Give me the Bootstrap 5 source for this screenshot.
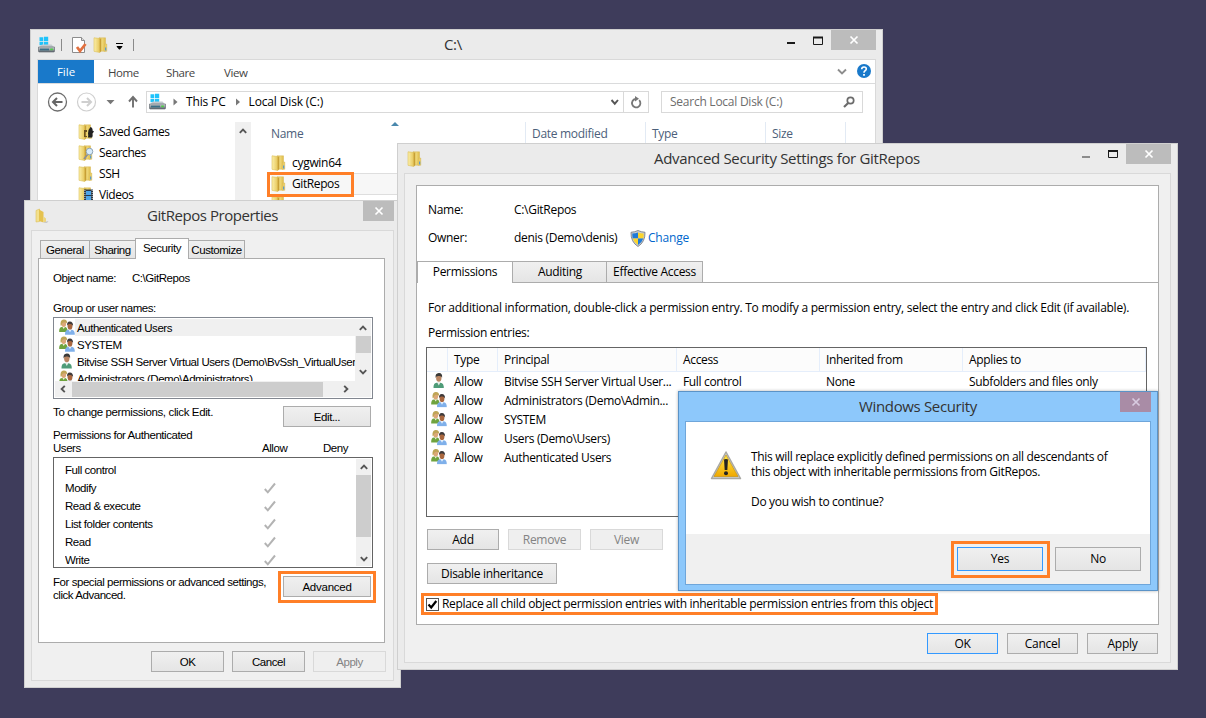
<!DOCTYPE html>
<html lang="en">
<head>
<meta charset="utf-8">
<meta name="viewport" content="width=device-width, initial-scale=1">
<title>GitRepos security settings</title>
<link rel="stylesheet" href="https://cdn.jsdelivr.net/npm/bootstrap@5.3.0/dist/css/bootstrap.min.css">
<style>
html,body{height:100%}
body{background:#3e3c5b;color:#000;font:12px/16px "Open Sans","Noto Sans",sans-serif;letter-spacing:-.3px;overflow:hidden;white-space:nowrap}
svg{display:block;flex:none}
/* windows */
.desk{width:1206px;height:718px}
.win{background:#ebebeb;border:1px solid #cfcfcf}
.win-title{font-size:15px;line-height:20px;letter-spacing:-.35px;color:#333;text-align:center;padding-bottom:2px}
.w-explorer{left:30px;top:29px;width:853px;height:260px}
.w-props{left:24px;top:200px;width:377px;height:488px}
.w-adv{left:397px;top:143px;width:781px;height:527px}
.w-dlg{left:678px;top:391px;width:480px;height:200px;background:#8dc8fb;border-color:#5b93c7;box-shadow:0 0 3px rgba(0,0,0,.3)}
.caps{top:0;right:6px}
.cap{height:20px;width:31px;background:#bcbcbc}
.cap.wide{width:45px}
.frame{background:#f0f0f0;border:1px solid #d9d9d9;margin:0 6px 6px}
/* buttons */
.wbtn{height:21px;padding:0;border:1px solid #acacac;border-radius:0;background:linear-gradient(#f0f0f0,#e5e5e5);color:#000;font:inherit;letter-spacing:inherit;line-height:19px}
.wbtn:disabled{border-color:#d9d9d9;background:#efefef;color:#838383;opacity:1}
.wbtn.def,.wbtn.def:hover{border-color:#3399ff;transition:none}
.w-dlg .wbtn{line-height:20px}
.w-adv .wbtn{line-height:19px}
.hl{border:3px solid #ff7f27}
/* explorer */
.body-x{background:#fff;border:1px solid #d9d9d9;border-bottom:0;margin:0 6px;height:230px}
.menu-x{height:24px;border-bottom:1px solid #dadbdc;color:#444;line-height:25px;font-size:11.5px;letter-spacing:-.4px}
.file-x{width:56px;height:23px;background:#1979ca;color:#fff;text-align:center;line-height:24px;letter-spacing:0}
.box-x{height:22px;border:1px solid #d9d9d9;background:#fff;line-height:20px}
.tree{width:197px;padding-left:40px;letter-spacing:-.45px}
.tree>div{height:21px}
.tree span{padding-bottom:2px}
.vbar{width:16px;background:#f0f0f0}
.hd{color:#4c607a;line-height:24px;height:21px;border-right:1px solid #e2eaf4;letter-spacing:-.3px}
/* properties dialog */
.ms{font:11.5px/13px "Liberation Sans",Arial,sans-serif;letter-spacing:-.45px}
.ms .wbtn{line-height:20px}
.page{background:#fff;border:1px solid #acacac}
.tabp{border:1px solid #acacac;border-bottom:0;background:linear-gradient(#f0f0f0,#e5e5e5);height:18px;line-height:19px;text-align:center;margin-right:-1px}
.tabp.on{height:21px;background:#fff;margin-bottom:-1px;line-height:19px;z-index:1}
.lst{border:1px solid #828790;background:#fff;width:320px}
.urow{height:17px;line-height:18px;padding-left:4px}
.urow span{padding-left:2px;flex:1;height:17px}
.prow{height:18px;line-height:18px}
/* advanced window */
.taba{border:1px solid #acacac;border-bottom:0;background:linear-gradient(#f0f0f0,#e5e5e5);height:21px;line-height:20px;text-align:center;width:96px;margin-right:-1px}
.taba.on{background:#fff;height:22px;margin-bottom:-1px}
.grid-a{display:grid;grid-template-columns:21px 50px 179px 143px 143px 1fr;letter-spacing:-.34px}
.grid-a>*{padding-left:6px;overflow:hidden}
.ghead>*{border-right:1px solid #e5eefb;border-bottom:1px solid #e5eefb;background:#fcfcfc;height:24px;line-height:24px}
.grow>*{height:19px;line-height:20px}
.grow>svg{height:17px;margin-left:4px;padding:0}
.chk{width:13px;height:13px;border:1px solid #555;background:#fff}
</style>
</head>
<body>
<svg width="0" height="0" class="position-absolute">
<defs>
<linearGradient id="gf" x1="0" x2="1"><stop offset="0" stop-color="#fbefa9"/><stop offset="1" stop-color="#e6c659"/></linearGradient>
<linearGradient id="gb" x1="0" x2="1"><stop offset="0" stop-color="#c39a2e"/><stop offset=".35" stop-color="#f3df85"/><stop offset="1" stop-color="#dfbc4a"/></linearGradient>
<linearGradient id="gw" x1="0" y1="0" x2="0" y2="1"><stop offset="0" stop-color="#ffe94a"/><stop offset="1" stop-color="#f0a800"/></linearGradient>
<linearGradient id="gd" x1="0" y1="0" x2="0" y2="1"><stop offset="0" stop-color="#cfd4d8"/><stop offset="1" stop-color="#5d666e"/></linearGradient>
<symbol id="folder" viewBox="0 0 16 16"><path d="M6 .8h6.500v13.400H6z" fill="url(#gb)" stroke="#d6b650" stroke-width=".5"/><path d="M11.500 7h2.300v7.300h-2.800z" fill="#e9cd66" stroke="#d6b650" stroke-width=".4"/><path d="M1 .8l5.800.7v14L1 14.300z" fill="url(#gf)" stroke="#dcbf58" stroke-width=".6"/><path d="M6.800 2.500L8.300 1v13l-1.500 1.600z" fill="#c79f35"/><path d="M12.200 10.500h1v3h-1z" fill="#3d8fe0"/></symbol>
<symbol id="drive" viewBox="0 0 17 17"><path d="M1.500 1.300h3.800v3.600H1.500zM6 .8h4.200v4.100H6zM1.500 5.700h3.800v3.600H1.500zM6 5.700h4.200v4.100H6z" fill="#1fc3fb"/><path d="M4 8.500h9.500l2.700 3H.8z" fill="#c3c9ce"/><path d="M.5 11h16v4.200q0 .8-.8.800H1.300q-.8 0-.8-.8z" fill="url(#gd)" stroke="#5a6268" stroke-width=".6"/><path d="M2 12.600h9v1.800H2z" fill="#3c6f86"/><path d="M12.300 12.500h2.500v1.700h-2.500z" fill="#49d43f"/></symbol>
<symbol id="one" viewBox="0 0 16 16"><path d="M2.500 15.500q-.3-4.800 3-5.300h4q3.500.6 3.300 5.300z" fill="#4f9c78"/><path d="M6 9.500l1.800 3.500 1.800-3.500z" fill="#e9efe9"/><ellipse cx="7.800" cy="5.600" rx="2.700" ry="3.700" fill="#b98562"/><path d="M4.600 5.500Q4 .8 7.800.6t3.300 4.600Q10.500 3.200 7.500 3.600 5 3.500 4.600 5.500z" fill="#3b3a38"/></symbol>
<symbol id="two" viewBox="0 0 16 16"><path d="M.2 12.900Q-.1 8.300 2.800 8h3.500q2.400.5 2.300 4.900z" fill="#6fa33e"/><path d="M3.500 8l1.200 2 1.200-2z" fill="#f3f3e4"/><ellipse cx="4.700" cy="4.800" rx="2.400" ry="3.200" fill="#dba878"/><path d="M1.600 6.800Q.8.600 4.600.4t3.500 4Q5.800 2.200 3.200 4.200 3 6.500 1.600 6.800z" fill="#bfa556"/><path d="M6 15.800q-.2-4.600 2.900-5h4q3 .6 2.900 5z" fill="#7fb0ea"/><path d="M9.400 10.600l1.600 2.600 1.600-2.600z" fill="#e8f1fb"/><ellipse cx="11" cy="7.200" rx="2.400" ry="3.400" fill="#a9673f"/><path d="M8.100 6.800Q7.500 2.500 10.800 2.400t3.300 4.500Q13 4.800 10.700 5.100 8.800 4.800 8.100 6.800z" fill="#3f3a3a"/></symbol>
<symbol id="x" viewBox="0 0 10 10"><path d="M1.500 1.500l7 7M8.500 1.500l-7 7" stroke="currentColor" stroke-width="1.700" fill="none"/></symbol>
<symbol id="up" viewBox="0 0 8 6"><path d="M.8 4.800L4 1.600l3.200 3.200" fill="none" stroke="#555" stroke-width="1.900"/></symbol>
<symbol id="tick" viewBox="0 0 12 12"><path d="M.8 7l3 3.300L11 1.500" fill="none" stroke="#b3b3b3" stroke-width="2"/></symbol>
</defs></svg>

<main class="desk position-relative overflow-hidden">

<!-- Explorer -->
<section class="win w-explorer position-absolute">
  <div class="caps position-absolute d-flex">
    <svg width="90" height="20" viewBox="0 0 90 20"><path d="M46 13h8" stroke="#1a1a1a" stroke-width="2"/><path d="M72.500 7.500h9v7h-9z" fill="none" stroke="#1a1a1a"/><path d="M72 7.500h10" stroke="#1a1a1a" stroke-width="2"/></svg>
    <div class="cap wide d-flex justify-content-center align-items-center text-white"><svg width="10" height="10"><use href="#x"/></svg></div>
  </div>
  <div class="d-flex align-items-center" style="height:29px">
    <svg width="17" height="17" style="margin-left:7px"><use href="#drive"/></svg>
    <svg width="76" height="20" viewBox="0 0 76 20"><path d="M6.500 4v12" stroke="#8a8a8a"/><path d="M17.500 2.500h9l3 3v12h-12z" fill="#fff" stroke="#8c8c8c"/><path d="M26.500 2.500v3h3" fill="#ddd" stroke="#8c8c8c"/><path d="M22 12l3 4 5.500-7" fill="none" stroke="#e2703f" stroke-width="2.800"/><use href="#folder" x="38" y="2" width="16" height="16"/><path d="M61 8.500h7M62 11.500h5l-2.500 2.800z" stroke="#000" fill="#000" stroke-width="1"/></svg>
    <svg width="4" height="20"><path d="M2.500 4v12" stroke="#8a8a8a"/></svg>
    <div class="win-title" style="margin-left:309px">C:\</div>
  </div>
  <div class="body-x">
    <div class="menu-x d-flex">
      <div class="file-x">File</div><div style="margin-left:14px;width:58px">Home</div><div style="width:58px">Share</div><div>View</div>
      <svg width="41" height="23" class="ms-auto" viewBox="0 0 41 23"><path d="M4 9.500l4 4 4-4" fill="none" stroke="#8d8d8d" stroke-width="1.900"/><circle cx="30" cy="11" r="7" fill="#1979ca"/><path d="M27.700 9.300q0-2.300 2.300-2.300t2.300 2q0 1-1.200 1.700T30 12.700" fill="none" stroke="#fff" stroke-width="1.600"/><path d="M29.100 14h1.800v1.700h-1.800z" fill="#fff"/></svg>
    </div>
    <div class="d-flex" style="padding:7px 12px 9px 8px">
      <svg width="100" height="22" viewBox="0 0 100 22"><g fill="none"><circle cx="11.500" cy="11" r="9" stroke="#6d6d6d" stroke-width="1.300"/><path d="M16.500 11h-9M11 7l-4 4 4 4" stroke="#666" stroke-width="2"/><circle cx="40.500" cy="11" r="9" stroke="#cfcfcf" stroke-width="1.200"/><path d="M35.500 11h9M41 7l4 4-4 4" stroke="#cfcfcf" stroke-width="2"/><path d="M87 16.500V7M83 10.500l4-4.500 4 4.500" stroke="#707070" stroke-width="1.900"/></g><path d="M60.500 9h8l-4 4.200z" fill="#777"/></svg>
      <div class="box-x d-flex align-items-center" style="width:503px;padding-left:2px;letter-spacing:-.15px">
        <svg width="17" height="17" style="margin-top:-2px"><use href="#drive"/></svg><svg width="20" height="20" viewBox="0 0 20 20"><path d="M7.500 6.500l4 3.500-4 3.500z" fill="#777"/></svg><span>This PC</span>
        <svg width="23" height="20" viewBox="0 0 23 20"><path d="M10 6.500l4 3.500-4 3.500z" fill="#777"/></svg><span>Local Disk (C:)</span>
        <svg width="44" height="20" class="ms-auto" viewBox="0 0 44 20"><path d="M7.500 8l3.300 3.700L14 8" fill="none" stroke="#555" stroke-width="1.900"/><path d="M19.500 0v20" stroke="#d9d9d9"/><path d="M35.200 8.200A4.200 4.200 0 1 1 31.500 7" fill="none" stroke="#777" stroke-width="1.800"/><path d="M31 4v5.500l4-2.800z" fill="#777"/></svg>
      </div>
      <div class="box-x d-flex align-items-center justify-content-between" style="width:202px;margin-left:12px;padding:0 6px 0 8px;color:#6d6d6d;letter-spacing:-.25px"><span>Search Local Disk (C:)</span><svg width="14" height="14" viewBox="0 0 14 14"><circle cx="8.500" cy="5.500" r="3.200" fill="none" stroke="#6b6b6b" stroke-width="1.700"/><path d="M6.200 8L2 12" stroke="#6b6b6b" stroke-width="2.200"/></svg></div>
    </div>
    <div class="d-flex">
      <div class="tree">
        <div class="d-flex align-items-center"><svg width="17" height="17" viewBox="0 0 17 17"><use href="#folder" width="16" height="16"/><path d="M12.500 3q2.500 1 2 3.500l1.500 1-1.500 2q.5 2-.5 4H10q.5-2.500 0-4 0-4 2.500-6.500z" fill="#222"/><path d="M6 6h3v2H7.500v4H9v1H6z" fill="#6b5120"/></svg><span class="ps-1">Saved Games</span></div>
        <div class="d-flex align-items-center"><svg width="17" height="17" viewBox="0 0 17 17"><use href="#folder" width="16" height="16"/><path d="M10 9l-4 5" stroke="#8c8f96" stroke-width="1.800"/><circle cx="11.500" cy="6.500" r="3.300" fill="#d6ebfb" stroke="#8fa3b5"/></svg><span class="ps-1">Searches</span></div>
        <div class="d-flex align-items-center"><svg width="17" height="17"><use href="#folder" width="16" height="16"/></svg><span class="ps-1">SSH</span></div>
        <div class="d-flex align-items-center"><svg width="17" height="17" viewBox="0 0 17 17"><use href="#folder" width="16" height="16"/><path d="M6 2.500h9V15H6z" fill="#2c3946"/><path d="M8 4h5v4H8zM8 9h5v5H8z" fill="#4fa5e8"/><path d="M6.900 3v12M14.200 3v12" stroke="#d8d8d8" stroke-dasharray="1 1"/></svg><span class="ps-1">Videos</span></div>
      </div>
      <div class="vbar" style="height:105px"><svg width="8" height="6" style="margin:6px 0 0 4px"><use href="#up"/></svg></div>
      <div class="flex-fill position-relative">
        <div class="d-flex" style="padding-left:20px">
          <div class="hd" style="width:255px">Name</div><div class="hd" style="width:120px;padding-left:6px">Date modified</div><div class="hd" style="width:120px;padding-left:6px">Type</div><div class="hd" style="width:80px;padding-left:6px">Size</div>
        </div>
        <svg width="8" height="4" class="position-absolute" style="left:140px;top:0"><path d="M0 4l4-4 4 4z" fill="#4a88ad"/></svg>
        <div class="d-flex align-items-center" style="margin-top:9px;height:21px;padding-left:20px"><svg width="16" height="16"><use href="#folder"/></svg><span style="padding-left:5px">cygwin64</span></div>
        <div class="d-flex align-items-center" style="height:22px;margin-left:20px;background:#f7f7f7;border:solid #dedede;border-width:1px 0"><svg width="16" height="16"><use href="#folder"/></svg><span style="padding-left:5px;letter-spacing:-.4px">GitRepos</span></div>
        <div style="padding:1px 0 0 20px"><svg width="16" height="16"><use href="#folder"/></svg></div>
        <div class="hl position-absolute" style="left:16px;top:50px;width:87px;height:25px"></div>
      </div>
    </div>
  </div>
</section>

<!-- GitRepos Properties -->
<section class="win w-props position-absolute">
  <div class="caps position-absolute"><div class="cap d-flex justify-content-center align-items-center text-white"><svg width="10" height="10"><use href="#x"/></svg></div></div>
  <div class="d-flex align-items-center" style="height:29px"><svg width="16" height="16" viewBox="0 0 16 16" style="margin-left:9px"><path d="M2 2.500L5.500 1v12.500l-3.500.5z" fill="#f3e08c" stroke="#dcc05a" stroke-width=".6"/><path d="M5 1.500l4.500 2.500v10.500L5 13z" fill="#e5c24f"/><path d="M9.500 8.500l2.500 2v4L9.500 14z" fill="#eed67c"/><path d="M12 13.500l2.500-.5-1.500 2h-4z" fill="#c9c9c9"/></svg><div class="win-title" style="margin-left:97px;letter-spacing:-.45px">GitRepos Properties</div></div>
  <div class="frame ms" style="height:451px;padding:7px 7px 0">
    <div class="d-flex align-items-end position-relative" style="padding-left:1px;height:20px">
      <div class="tabp" style="width:50px">General</div><div class="tabp" style="width:47px">Sharing</div><div class="tabp on position-relative" style="width:54px">Security</div><div class="tabp" style="width:57px">Customize</div>
    </div>
    <div class="page" style="height:385px;width:347px;margin-left:-1px;padding:13px 11px 0 14px">
      <div class="d-flex"><div style="width:79px">Object name:</div><div>C:\GitRepos</div></div>
      <div style="margin-top:17px">Group or user names:</div>
      <div class="lst d-flex flex-column" style="height:82px;margin-top:2px;padding:1px">
        <div class="d-flex" style="height:62px">
          <div class="overflow-hidden" style="width:300px">
            <div class="urow d-flex"><svg width="16" height="16"><use href="#two"/></svg><span style="background:#f0f0f0">Authenticated Users</span></div>
            <div class="urow d-flex"><svg width="16" height="16"><use href="#two"/></svg><span>SYSTEM</span></div>
            <div class="urow d-flex"><svg width="16" height="16"><use href="#one"/></svg><span>Bitvise SSH Server Virtual Users (Demo\BvSsh_VirtualUsers)</span></div>
            <div class="urow d-flex"><svg width="16" height="16"><use href="#two"/></svg><span>Administrators (Demo\Administrators)</span></div>
          </div>
          <div class="vbar d-flex flex-column align-items-center" style="padding-top:6px"><svg width="8" height="6"><use href="#up"/></svg><div style="width:15px;height:17px;background:#cdcdcd;margin:5px 0 16px"></div><svg width="8" height="6" style="transform:scaleY(-1)"><use href="#up"/></svg></div>
        </div>
        <div class="d-flex align-items-center" style="height:16px;background:#f0f0f0;padding-left:4px;width:316px"><svg width="8" height="6" style="transform:rotate(-90deg)"><use href="#up"/></svg><div style="width:251px;height:15px;background:#cdcdcd;margin:0 19px 0 5px"></div><svg width="8" height="6" style="transform:rotate(90deg)"><use href="#up"/></svg></div>
      </div>
      <div class="d-flex justify-content-between" style="padding:7px 2px 0 0"><div style="letter-spacing:-.37px">To change permissions, click Edit.</div><button class="btn wbtn" style="width:88px">Edit...</button></div>
      <div class="d-flex" style="padding-top:2px"><div style="width:209px">Permissions for Authenticated<br>Users</div><div style="padding-top:13px;width:61px">Allow</div><div style="padding-top:13px">Deny</div></div>
      <div class="lst d-flex" style="height:111px;margin-top:2px;padding:1px 0 1px 11px;border-color:#646464">
        <div class="overflow-hidden" style="width:291px;padding-top:2px">
          <div class="prow">Full control</div>
          <div class="prow d-flex"><span style="width:199px">Modify</span><svg width="12" height="12" style="margin-top:3px"><use href="#tick"/></svg></div>
          <div class="prow d-flex"><span style="width:199px">Read &amp; execute</span><svg width="12" height="12" style="margin-top:3px"><use href="#tick"/></svg></div>
          <div class="prow d-flex"><span style="width:199px">List folder contents</span><svg width="12" height="12" style="margin-top:3px"><use href="#tick"/></svg></div>
          <div class="prow d-flex"><span style="width:199px">Read</span><svg width="12" height="12" style="margin-top:3px"><use href="#tick"/></svg></div>
          <div class="prow d-flex"><span style="width:199px">Write</span><svg width="12" height="12" style="margin-top:3px"><use href="#tick"/></svg></div>
        </div>
        <div class="vbar d-flex flex-column align-items-center" style="padding-top:5px;width:15px"><svg width="8" height="6"><use href="#up"/></svg><div style="width:15px;height:62px;background:#cdcdcd;margin:5px 0 19px"></div><svg width="8" height="6" style="transform:scaleY(-1)"><use href="#up"/></svg></div>
      </div>
      <div class="d-flex position-relative justify-content-between" style="padding:8px 2px 0 0"><div>For special permissions or advanced settings,<br>click Advanced.</div><button class="btn wbtn" style="width:88px;letter-spacing:-.25px">Advanced</button><div class="hl position-absolute" style="left:225px;top:3px;width:98px;height:32px"></div></div>
    </div>
    <div class="d-flex justify-content-end" style="gap:8px;padding-top:8px"><button class="btn wbtn" style="width:73px">OK</button><button class="btn wbtn" style="width:73px">Cancel</button><button class="btn wbtn" style="width:73px" disabled>Apply</button></div>
  </div>
</section>

<!-- Advanced Security Settings -->
<section class="win w-adv position-absolute">
  <div class="caps position-absolute d-flex">
    <svg width="90" height="20" viewBox="0 0 90 20"><path d="M46 13h8" stroke="#8c8c8c" stroke-width="2"/><path d="M72.500 6.500h9v7h-9z" fill="none" stroke="#1a1a1a"/><path d="M72 7h10" stroke="#1a1a1a" stroke-width="2"/></svg>
    <div class="cap wide d-flex justify-content-center align-items-center text-white"><svg width="10" height="10"><use href="#x"/></svg></div>
  </div>
  <div class="d-flex align-items-center" style="height:29px"><svg width="16" height="16" style="margin-left:9px"><use href="#folder"/></svg><div class="win-title" style="margin-left:231px;letter-spacing:-.33px">Advanced Security Settings for GitRepos</div></div>
  <div class="frame" style="height:490px;padding:11px 11px 0">
    <div class="page" style="height:440px">
      <div style="padding:16px 0 0 11px">
        <div class="d-flex"><div style="width:86px">Name:</div><div>C:\GitRepos</div></div>
        <div class="d-flex" style="margin-top:12px"><div style="width:86px">Owner:</div><div style="width:116px">denis (Demo\denis)</div>
          <svg width="16" height="17" viewBox="0 0 16 17"><path d="M8 .5Q11 2 15 2.300 15.300 12 8 16.500.7 12 1 2.300 5 2 8 .5z" fill="#c9ccd1" stroke="#7c8189" stroke-width=".9"/><path d="M8 2.500V8.500H2.700Q2.200 6 2.300 3.600 5.500 3.400 8 2.500z" fill="#1f7ad6"/><path d="M8 2.500q2.500.9 5.700 1.100.1 2.400-.4 4.900H8z" fill="#fbd42d"/><path d="M8 8.500v6.400Q3.900 12.400 2.700 8.500z" fill="#fbd42d"/><path d="M8 8.500v6.400q4.100-2.500 5.300-6.400z" fill="#1f7ad6"/></svg>
          <div style="color:#0066cc;padding-left:2px;letter-spacing:-.2px">Change</div></div>
      </div>
      <div class="d-flex align-items-end" style="height:21px;margin-top:14px"><div class="taba on position-relative">Permissions</div><div class="taba">Auditing</div><div class="taba" style="width:97px;margin-left:-1px">Effective Access</div></div>
      <div style="border-top:1px solid #acacac;padding:17px 11px 0 9px">
        <div style="padding-left:2px;letter-spacing:-.265px">For additional information, double-click a permission entry. To modify a permission entry, select the entry and click Edit (if available).</div>
        <div style="padding:9px 0 0 2px">Permission entries:</div>
        <div style="height:170px;border:1px solid #646464;margin-top:6px;width:721px">
          <div class="grid-a ghead"><div></div><div>Type</div><div>Principal</div><div>Access</div><div>Inherited from</div><div>Applies to</div></div>
          <div class="grid-a grow"><svg width="16" viewBox="0 0 16 16"><use href="#one"/></svg><div>Allow</div><div>Bitvise SSH Server Virtual User...</div><div>Full control</div><div>None</div><div>Subfolders and files only</div></div>
          <div class="grid-a grow"><svg width="16" viewBox="0 0 16 16"><use href="#two"/></svg><div>Allow</div><div>Administrators (Demo\Admin...</div></div>
          <div class="grid-a grow"><svg width="16" viewBox="0 0 16 16"><use href="#two"/></svg><div>Allow</div><div>SYSTEM</div></div>
          <div class="grid-a grow"><svg width="16" viewBox="0 0 16 16"><use href="#two"/></svg><div>Allow</div><div>Users (Demo\Users)</div></div>
          <div class="grid-a grow"><svg width="16" viewBox="0 0 16 16"><use href="#two"/></svg><div>Allow</div><div>Authenticated Users</div></div>
        </div>
        <div class="d-flex" style="padding:12px 0 0 1px;gap:9px"><button class="btn wbtn" style="width:72px">Add</button><button class="btn wbtn" style="width:73px" disabled>Remove</button><button class="btn wbtn" style="width:73px" disabled>View</button></div>
        <div style="padding:13px 0 0 1px"><button class="btn wbtn d-block" style="width:130px">Disable inheritance</button></div>
        <div class="hl d-flex align-items-center" style="margin:9px 0 0 -5px;width:517px;height:22px;padding-left:2px"><span class="chk"><svg width="11" height="11" viewBox="0 0 11 11"><path d="M1.500 5.500l2.700 3L9.300 2" fill="none" stroke="#000" stroke-width="2.200"/></svg></span><span style="padding:0 0 1px 3px;letter-spacing:-.335px">Replace all child object permission entries with inheritable permission entries from this object</span></div>
      </div>
    </div>
    <div class="d-flex justify-content-end" style="gap:9px;padding:8px 1px 0 0"><button class="btn wbtn def" style="width:71px">OK</button><button class="btn wbtn" style="width:71px">Cancel</button><button class="btn wbtn" style="width:71px">Apply</button></div>
  </div>
</section>

<!-- Windows Security -->
<section class="win w-dlg position-absolute">
  <div class="caps position-absolute"><div class="cap d-flex justify-content-center align-items-center" style="background:#a98ca6;color:#d8cbe0"><svg width="10" height="10"><use href="#x"/></svg></div></div>
  <div class="win-title" style="height:29px;line-height:29px">Windows Security</div>
  <div class="d-flex flex-column" style="margin:0 6px;border:1px solid #6fa6da;height:164px;background:#fff">
    <div class="d-flex" style="height:112px;padding:27px 0 0 24px"><svg width="32" height="32" viewBox="0 0 32 32"><path d="M16 3L30.500 29.500H1.500z" fill="#d0d0cc" stroke="#a9a9a5" stroke-width="1.500" stroke-linejoin="round"/><path d="M16 6L28 27.500H4z" fill="url(#gw)" stroke="#c58d00" stroke-width=".6"/><path d="M14 10.500q2-1.200 4 0l-.7 10.500h-2.600z" fill="#222"/><circle cx="16" cy="24.300" r="2" fill="#222"/></svg><div style="padding-left:9px;line-height:15px;letter-spacing:-.32px">This will replace explicitly defined permissions on all descendants of<br>this object with inheritable permissions from GitRepos.<br><br>Do you wish to continue?</div></div>
    <div class="d-flex flex-fill justify-content-end align-items-start" style="background:#f0f0f0;padding:7px 9px 0 0"><div class="hl" style="padding:3px 4px 4px 3px;width:99px;height:37px"><button class="btn wbtn def d-block" style="width:86px;height:24px">Yes</button></div><button class="btn wbtn" style="width:86px;height:24px;margin:6px 0 0 5px">No</button></div>
  </div>
</section>
</main>
<script src="https://cdn.jsdelivr.net/npm/bootstrap@5.3.0/dist/js/bootstrap.bundle.min.js"></script>
</body>
</html>
